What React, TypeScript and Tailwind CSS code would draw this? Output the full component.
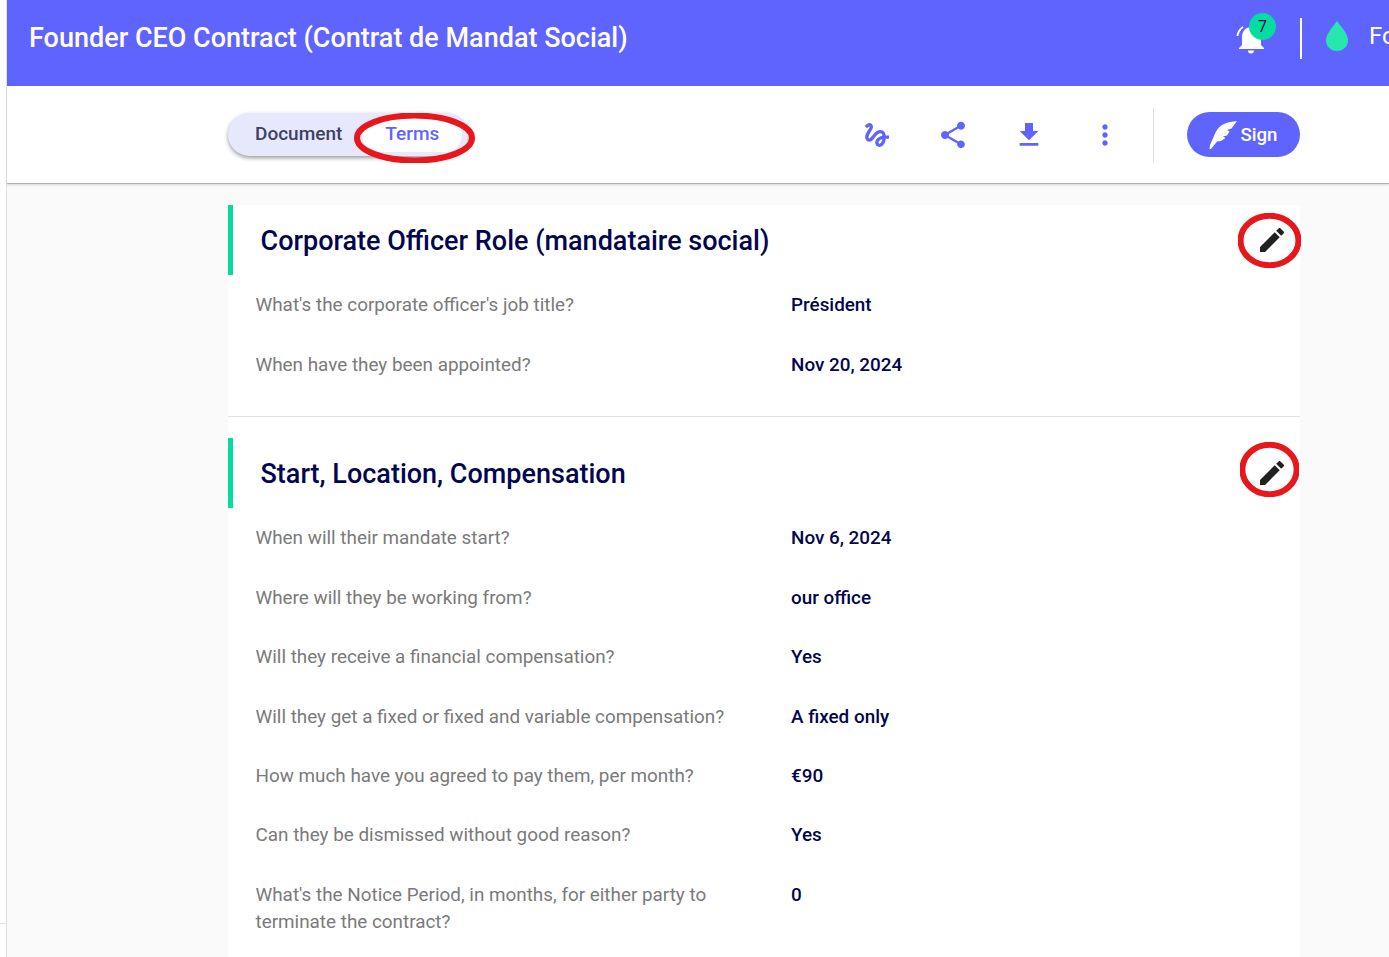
const EDIT =
  "M3 17.25V21h3.75L17.81 9.94l-3.75-3.75L3 17.25zM20.71 7.04c.39-.39.39-1.02 0-1.41l-2.34-2.34c-.39-.39-1.02-.39-1.41 0l-1.83 1.83 3.75 3.75 1.83-1.83z";
const GESTURE =
  "M4.59 6.89c.7-.71 1.4-1.35 1.71-1.22.5.2 0 1.03-.3 1.52-.25.42-2.86 3.89-2.86 6.31 0 1.28.48 2.34 1.34 2.98.75.56 1.74.73 2.64.46 1.07-.31 1.95-1.4 3.06-2.77 1.21-1.49 2.83-3.44 4.08-3.44 1.63 0 1.65 1.01 1.76 1.79-3.78.64-5.38 3.67-5.38 5.37 0 1.7 1.44 3.09 3.21 3.09 1.63 0 4.29-1.33 4.69-6.1H21v-2.5h-2.47c-.15-1.65-1.09-4.2-4.03-4.2-2.25 0-4.18 1.91-4.94 2.84-.58.73-2.06 2.48-2.29 2.72-.25.3-.68.84-1.11.84-.45 0-.72-.83-.36-1.92.35-1.09 1.4-2.86 1.85-3.52.78-1.14 1.3-1.92 1.3-3.28C8.95 3.69 7.31 3 6.44 3 5.12 3 3.97 4 3.72 4.25c-.36.36-.66.66-.88.93l1.75 1.71zm9.29 11.66c-.31 0-.74-.26-.74-.72 0-.6.73-2.2 2.87-2.76-.3 2.69-1.43 3.48-2.13 3.48z";
const SHARE =
  "M18 16.08c-.76 0-1.44.3-1.96.77L8.91 12.7c.05-.23.09-.46.09-.7s-.04-.47-.09-.7l7.05-4.11c.54.5 1.25.81 2.04.81 1.66 0 3-1.34 3-3s-1.34-3-3-3-3 1.34-3 3c0 .24.04.47.09.7L8.04 9.81C7.5 9.31 6.79 9 6 9c-1.66 0-3 1.34-3 3s1.34 3 3 3c.79 0 1.5-.31 2.04-.81l7.12 4.16c-.05.21-.08.43-.08.65 0 1.61 1.31 2.92 2.92 2.92 1.61 0 2.92-1.31 2.92-2.92s-1.31-2.92-2.92-2.92z";
const DOWNLOAD = "M19 9h-4V3H9v6H5l7 7 7-7zM5 18v2h14v-2H5z";
const MORE =
  "M12 8c1.1 0 2-.9 2-2s-.9-2-2-2-2 .9-2 2 .9 2 2 2zm0 2c-1.1 0-2 .9-2 2s.9 2 2 2 2-.9 2-2-.9-2-2-2zm0 6c-1.1 0-2 .9-2 2s.9 2 2 2 2-.9 2-2-.9-2-2-2z";

function ToolIcon({ d }: { d: string }) {
  return (
    <span className="flex w-[76px] justify-center">
      <svg viewBox="0 0 24 24" className="h-[32px] w-[32px] fill-[#5f64ff]">
        <path d={d} />
      </svg>
    </span>
  );
}

// hand-drawn annotation rings that sit on top of the screenshot
function RedRing({ className }: { className: string }) {
  return (
    <svg viewBox="0 0 100 100" preserveAspectRatio="none" className={`pointer-events-none absolute ${className}`}>
      <ellipse
        cx="50"
        cy="50"
        rx="46"
        ry="45"
        fill="none"
        stroke="#e8171c"
        strokeWidth="6"
        vectorEffect="non-scaling-stroke"
      />
    </svg>
  );
}

function Bell() {
  return (
    <svg viewBox="0 0 30 30" className="h-[30px] w-[30px]">
      <path
        className="fill-white"
        d="M3 24V23L6 20V12C6 6 10 2 15.5 2C21 2 25 6 25 12V20L28 23V24ZM12 25.5H18A3 3 0 0 1 12 25.5Z"
      />
      <path d="M1.5 11C2 7 4 4 7 2" fill="none" stroke="#fff" strokeWidth="2" />
    </svg>
  );
}

function Quill() {
  return (
    <svg viewBox="0 0 28 28" className="h-[28px] w-[28px] fill-white">
      <path d="M1 24L7 10.5C9 7 11.5 4.5 15 3C19 1.2 24 .4 28 0L22.5 7.5L18 9L20.5 10.5L18 14.5L14 15.5L16.5 17L12 20L8 20.5L2 28H.5Z" />
    </svg>
  );
}

type Term = { q: string[]; a: string };

function TermRow({ q, a }: Term) {
  return (
    <div className="flex pb-[32.45px] pl-[27.5px] text-[18.87px] leading-[27px]">
      <div className="w-[535.5px] shrink-0 text-[#7a7a7a]">
        {q.map((line) => (
          <div key={line}>{line}</div>
        ))}
      </div>
      <div className="font-medium text-[#03064f]">{a}</div>
    </div>
  );
}

function SectionHead({ title, ring }: { title: string; ring: string }) {
  return (
    <div className="relative flex h-[70px] items-center justify-between border-l-[5px] border-[#05dca0] pl-[27.5px] pr-[12px]">
      <h2 className="mt-[2px] text-[27px] font-medium text-[#03064f]">{title}</h2>
      <svg viewBox="0 0 24 24" className="h-[32px] w-[32px] fill-[#212121]">
        <path d={EDIT} />
      </svg>
      <RedRing className={ring} />
    </div>
  );
}

const ROLE: Term[] = [
  { q: ["What's the corporate officer's job title?"], a: "Président" },
  { q: ["When have they been appointed?"], a: "Nov 20, 2024" },
];

const START: Term[] = [
  { q: ["When will their mandate start?"], a: "Nov 6, 2024" },
  { q: ["Where will they be working from?"], a: "our office" },
  { q: ["Will they receive a financial compensation?"], a: "Yes" },
  { q: ["Will they get a fixed or fixed and variable compensation?"], a: "A fixed only" },
  { q: ["How much have you agreed to pay them, per month?"], a: "€90" },
  { q: ["Can they be dismissed without good reason?"], a: "Yes" },
  { q: ["What's the Notice Period, in months, for either party to", "terminate the contract?"], a: "0" },
];

export default function App() {
  return (
    <div className="relative flex h-[957px] w-[1389px] overflow-hidden bg-white font-['Roboto',sans-serif]">
      {/* thin strip of the page behind the app frame */}
      <div className="w-[7px] shrink-0 border-r border-[#e0e0e0] pt-[923px]">
        <div className="h-px bg-[#e0e0e0]" />
      </div>

      <div className="flex min-w-0 flex-1 flex-col bg-[#fafafa]">
        <header className="flex h-[86px] shrink-0 items-center justify-between bg-[#5f64ff] pb-[10px] pl-[22px]">
          <h1 className="whitespace-nowrap text-[27px] font-medium text-white">
            Founder CEO Contract (Contrat de Mandat Social)
          </h1>
          <div className="flex w-[165px] shrink-0 items-center">
            <div className="relative ml-[12px] mt-[4px] h-[30px] w-[30px] shrink-0">
              <Bell />
              <span className="absolute left-[13px] top-[-12px] flex h-[27px] w-[27px] items-center justify-center rounded-full bg-[#05dca0] text-[16px] text-[#03064f]">
                7
              </span>
            </div>
            <div className="ml-[34px] h-[41px] w-[2px] shrink-0 bg-white" />
            <svg viewBox="0 0 22 30" className="mb-[5px] ml-[24px] h-[30px] w-[22px] shrink-0 fill-[#27e6ae]">
              <path d="M11 0C13 3.5 22 12 22 19.5C22 25.6 17.1 30 11 30C4.9 30 0 25.6 0 19.5C0 12 9 3.5 11 0Z" />
            </svg>
            <span className="mb-[5px] ml-[21px] whitespace-nowrap text-[24px] text-white">Founder</span>
          </div>
        </header>

        <div className="flex h-[98px] shrink-0 items-center border-b border-[#b5b5b5] bg-white pl-[221px] pr-[89px] shadow-[0_1px_2px_rgba(0,0,0,0.15)]">
          <div className="relative flex h-[43px] w-[240px] items-center rounded-full bg-[#e8e8fd] shadow-[0_2px_4px_rgba(0,0,0,0.4)]">
            <span className="pl-[27px] text-[19px] font-medium text-[#3b4263]">Document</span>
            <span className="ml-[20px] flex h-[34px] w-[100px] items-center justify-center rounded-full bg-white text-[19px] font-medium text-[#5f64ff]">
              Terms
            </span>
            <RedRing className="left-[124px] top-[0px] h-[50px] w-[125px]" />
          </div>
          <div className="ml-auto flex items-center">
            <ToolIcon d={GESTURE} />
            <ToolIcon d={SHARE} />
            <ToolIcon d={DOWNLOAD} />
            <ToolIcon d={MORE} />
          </div>
          <div className="ml-[10px] h-[54px] w-px bg-[#e0e0e0]" />
          <button
            type="button"
            className="ml-[33px] flex h-[45px] w-[113px] items-center justify-center gap-[3px] rounded-full bg-[#5f64ff] text-[18.67px] font-medium text-white"
          >
            <Quill />
            Sign
          </button>
        </div>

        <main className="ml-[221px] mr-[89px] mt-[21px] flex-1 bg-white">
          <section className="border-b border-[#e0e0e0] pb-[6px]">
            <SectionHead title="Corporate Officer Role (mandataire social)" ring="right-[-1px] top-[8px] h-[55px] w-[63px]" />
            <div className="pt-[16.2px]">
              {ROLE.map((t) => (
                <TermRow key={t.a} {...t} />
              ))}
            </div>
          </section>
          <div className="h-[21px] bg-white" />
          <section>
            <SectionHead title="Start, Location, Compensation" ring="right-[1px] top-[4px] h-[55px] w-[59px]" />
            <div className="pt-[16.2px]">
              {START.map((t) => (
                <TermRow key={t.q[0]} {...t} />
              ))}
            </div>
          </section>
        </main>
      </div>
    </div>
  );
}
